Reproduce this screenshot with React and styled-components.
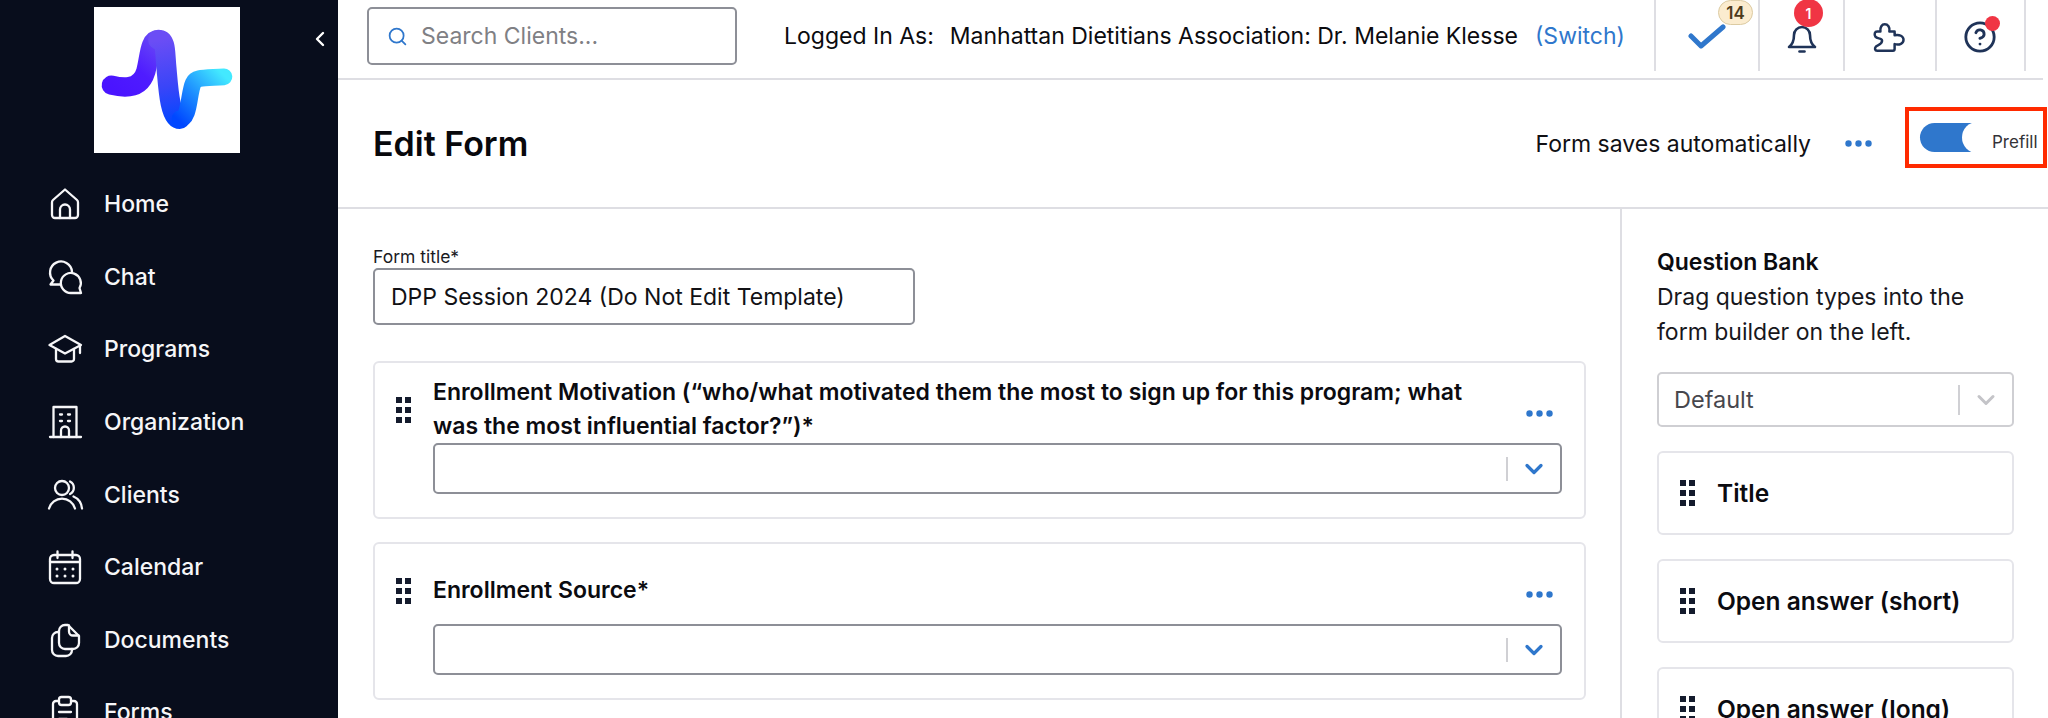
import styled, { createGlobalStyle } from 'styled-components';
import { Search, ChevronLeft, ChevronDown, CircleHelp } from 'lucide-react';

const GlobalStyle = createGlobalStyle`
  html, body {
    margin: 0;
    padding: 0;
    background: #ffffff;
    overflow: hidden;
  }
  * {
    box-sizing: border-box;
  }
  body {
    font-family: Inter, "Noto Sans", sans-serif;
    color: #0b0b0f;
  }
`;

const Page = styled.div`
  display: grid;
  grid-template-columns: 338px minmax(0, 1fr);
  width: 2048px;
  height: 718px;
  overflow: hidden;
`;

const Sidebar = styled.aside`
  background: #080d1c;
  height: 718px;
  overflow: hidden;
`;

const SidebarTop = styled.div`
  display: flex;
  justify-content: space-between;
  align-items: flex-start;
  padding: 7px 6px 0 94px;
`;

const LogoBox = styled.div`
  width: 146px;
  height: 146px;
  background: #ffffff;
  display: flex;
`;

const CollapseBtn = styled.span`
  display: flex;
  margin-top: 20px;
  color: #ffffff;
`;

const NavList = styled.nav`
  margin-top: 15px;
`;

const NavItem = styled.div`
  height: 72.6px;
  display: flex;
  align-items: center;
  padding-left: 48px;
  gap: 22px;
  color: #f6f6f8;
  font-size: 23px;
  font-weight: 500;
`;

const NavIcon = styled.svg`
  width: 34px;
  height: 34px;
  flex: none;
  fill: none;
  stroke: currentColor;
  stroke-width: 2.3;
  stroke-linecap: round;
  stroke-linejoin: round;
  overflow: visible;
`;

const Main = styled.main`
  display: flex;
  flex-direction: column;
  min-width: 0;
`;

const TopBar = styled.header`
  height: 80px;
  margin-right: 5px;
  border-bottom: 2px solid #dedee3;
  display: flex;
  align-items: flex-start;
  padding: 7px 0 0 29px;
`;

const SearchBox = styled.label`
  width: 370px;
  height: 58px;
  border: 2px solid #8d8f97;
  border-radius: 5px;
  display: flex;
  align-items: center;
  gap: 11px;
  padding-left: 18px;
  color: #2f77cc;
`;

const SearchInput = styled.input`
  border: 0;
  outline: 0;
  width: 300px;
  font: 400 23px Inter, sans-serif;
  &::placeholder {
    color: #7f8084;
    opacity: 1;
  }
`;

const UserLine = styled.div`
  margin-left: 47px;
  height: 57px;
  display: flex;
  align-items: center;
  font-size: 23px;
  white-space: nowrap;
`;

const UserName = styled.span`
  margin-left: 16px;
`;

const SwitchLink = styled.span`
  color: #2f77cc;
  margin-left: 17px;
`;

const IconCells = styled.div`
  margin-left: auto;
  margin-top: -7px;
  display: flex;
  height: 71px;
`;

const IconCell = styled.div`
  position: relative;
  width: ${(p) => p.$w}px;
  height: 71px;
  border-left: 2px solid #dedee3;
  display: flex;
  align-items: center;
  justify-content: center;
  color: #1f3358;
`;

const CountBadge = styled.span`
  position: absolute;
  top: 0;
  left: 62px;
  width: 35px;
  height: 25px;
  border-radius: 13px;
  background: #fbeccf;
  border: 1px solid #dccba2;
  color: #4d3a1c;
  font-size: 17px;
  font-weight: 600;
  display: flex;
  align-items: center;
  justify-content: center;
`;

const AlertBadge = styled.span`
  position: absolute;
  top: -1px;
  left: 34px;
  width: 29px;
  height: 28px;
  border-radius: 50%;
  background: #f03544;
  color: #ffffff;
  font-size: 14px;
  font-weight: 600;
  display: flex;
  align-items: center;
  justify-content: center;
`;

const RedDot = styled.span`
  position: absolute;
  top: 16px;
  left: 48px;
  width: 15px;
  height: 15px;
  border-radius: 50%;
  background: #f03544;
`;

const PageHead = styled.div`
  height: 129px;
  border-bottom: 2px solid #dedee3;
  display: flex;
  align-items: center;
  padding: 0 1px 0 35px;
`;

const PageTitle = styled.h1`
  margin: 0;
  font-size: 34px;
  font-weight: 600;
  color: #08080c;
`;

const SaveNote = styled.span`
  margin-left: auto;
  font-size: 23px;
  color: #101014;
`;

const HeadDots = styled.span`
  display: flex;
  margin: 0 33px 0 34px;
`;

const PrefillBox = styled.div`
  width: 142px;
  height: 61px;
  margin-bottom: 13px;
  border: 4px solid #ff2a00;
  display: flex;
  align-items: center;
  padding-left: 11px;
  gap: 2px;
`;

const Toggle = styled.span`
  position: relative;
  width: 70px;
  height: 29px;
  flex: none;
  border-radius: 15px;
  background: #2f77cc;
`;

const Knob = styled.span`
  position: absolute;
  top: -1px;
  right: -2px;
  width: 30px;
  height: 31px;
  border-radius: 50%;
  background: #ffffff;
  box-shadow: 8px 0 0 #ffffff;
`;

const PrefillText = styled.span`
  position: relative;
  font-size: 17px;
  color: #333338;
  margin-top: 10px;
`;

const Body = styled.div`
  display: flex;
  flex: 1;
  min-height: 0;
`;

const Builder = styled.section`
  width: 1284px;
  flex: none;
  border-right: 2px solid #dedee3;
  padding: 38px 34px 0 35px;
`;

const FieldLabel = styled.label`
  display: block;
  font-size: 17.5px;
  line-height: 20px;
  margin-bottom: 1px;
  color: #1a1a1f;
`;

const TitleInput = styled.input`
  display: block;
  width: 542px;
  height: 57px;
  border: 2px solid #8d8f97;
  border-radius: 5px;
  padding: 0 16px;
  font: 400 23px Inter, sans-serif;
  color: #111115;
  outline: 0;
`;

const QuestionCard = styled.div`
  display: grid;
  grid-template-columns: 37px minmax(0, 1fr);
  height: 158px;
  margin-top: ${(p) => p.$top}px;
  border: 2px solid #e5e5ea;
  border-radius: 6px;
  padding: 10px 22px 0 21px;
`;

const GripCol = styled.div`
  padding-top: 24px;
`;

const QuestionHead = styled.div`
  height: 70px;
  padding-top: 2px;
  display: flex;
  align-items: center;
  justify-content: space-between;
`;

const QuestionTitle = styled.div`
  width: 1060px;
  font-size: 23px;
  line-height: 34px;
  font-weight: 600;
  color: #0b0b10;
`;

const CardDots = styled.span`
  display: flex;
  margin-top: 8px;
  margin-right: 9px;
`;

const SelectBox = styled.div`
  height: 51px;
  border: 2px solid ${(p) => (p.$muted ? '#cfcfd3' : '#8d8f97')};
  border-radius: 5px;
  display: flex;
  align-items: center;
  justify-content: space-between;
  padding: 0 12px 0 15px;
  font-size: 23.5px;
  color: #47474d;
`;

const SelectEnd = styled.span`
  display: flex;
  align-items: center;
  gap: 12px;
  color: ${(p) => (p.$muted ? '#c4c4c8' : '#2f77cc')};
`;

const SelectBar = styled.span`
  width: 2px;
  height: ${(p) => (p.$muted ? 30 : 24)}px;
  background: #d0d0d4;
`;

const Bank = styled.aside`
  flex: 1;
  padding: 36px 34px 0 35px;
  min-width: 0;
`;

const BankHead = styled.div`
  font-size: 23px;
  line-height: 35px;
  font-weight: 600;
`;

const BankText = styled.p`
  margin: 0 0 22px;
  font-size: 23px;
  line-height: 35px;
  color: #17171c;
`;

const BankSelect = styled(SelectBox)`
  height: 55px;
`;

const BankItem = styled.div`
  height: 84px;
  margin-top: 24px;
  border: 2px solid #e5e5ea;
  border-radius: 6px;
  display: flex;
  align-items: center;
  gap: 22px;
  padding-left: 21px;
  font-size: 24.5px;
  font-weight: 600;
  color: #0b0b10;
`;

const Grip = () => (
  <svg width="15" height="26" viewBox="0 0 15 26" fill="#141b2d">
    {[0, 10, 20].map((y) => (
      <g key={y}>
        <rect x="0" y={y} width="6" height="6" />
        <rect x="9" y={y} width="6" height="6" />
      </g>
    ))}
  </svg>
);

const Dots = () => (
  <svg width="27" height="7" viewBox="0 0 27 7" fill="#2f77cc">
    <circle cx="3.5" cy="3.5" r="3.2" />
    <circle cx="13.5" cy="3.5" r="3.2" />
    <circle cx="23.5" cy="3.5" r="3.2" />
  </svg>
);

const Logo = () => (
  <svg width="146" height="146" viewBox="283 22 437 437" fill="none" strokeWidth="60" strokeLinecap="round" strokeLinejoin="round">
    <defs>
      <linearGradient id="logoA" gradientUnits="userSpaceOnUse" x1="340" y1="270" x2="480" y2="110">
        <stop offset="0" stopColor="#4a14ff" />
        <stop offset="0.45" stopColor="#4f1cff" />
        <stop offset="1" stopColor="#6b4df5" />
      </linearGradient>
      <linearGradient id="logoB" gradientUnits="userSpaceOnUse" x1="480" y1="120" x2="535" y2="370">
        <stop offset="0" stopColor="#6b4df5" />
        <stop offset="0.55" stopColor="#3a45f8" />
        <stop offset="1" stopColor="#0047ff" />
      </linearGradient>
      <linearGradient id="logoC" gradientUnits="userSpaceOnUse" x1="535" y1="360" x2="670" y2="225">
        <stop offset="0" stopColor="#0047ff" />
        <stop offset="0.45" stopColor="#1c8cff" />
        <stop offset="1" stopColor="#43e9ff" />
      </linearGradient>
    </defs>
    <path d="M335 256 C360 262 420 275 438 215 C450 170 448 120 475 120" stroke="url(#logoA)" strokeWidth="58" />
    <path d="M475 120 C500 120 495 160 500 205 C505 260 510 357 540 357" stroke="url(#logoB)" />
    <path d="M540 357 C570 357 566 280 580 250 C588 232 610 235 672 231" stroke="url(#logoC)" strokeWidth="50" />
  </svg>
);

const navItems = [
  {
    label: 'Home',
    icon: (
      <>
        <path d="M17 2.5 L29 13 a3 3 0 0 1 1 2.4 V28 a3 3 0 0 1-3 3 H7 a3 3 0 0 1-3-3 V15.4 A3 3 0 0 1 5 13 Z" />
        <path d="M12 31 V22.5 a5 5 0 0 1 10 0 V31" />
      </>
    ),
  },
  {
    label: 'Chat',
    icon: (
      <>
        <path d="M13 24.5 H2.5 L5.5 20.5 A11 11 0 1 1 24 11.5" />
        <path d="M33 33 H23 A10 10 0 1 1 31.5 28 Z" />
      </>
    ),
  },
  {
    label: 'Programs',
    icon: (
      <>
        <path d="M17 4 L33 13 L17 21.5 L1.5 13 Z" />
        <path d="M8 17 V27 a2.5 2.5 0 0 0 2.5 2.5 H23.5 a2.5 2.5 0 0 0 2.5-2.5 V17" />
        <path d="M32 14 V21" />
      </>
    ),
  },
  {
    label: 'Organization',
    icon: (
      <>
        <path d="M5.5 32 V2 H28.5 V32" />
        <path d="M2 32 H33" />
        <path d="M13 32 V25.5 a4 4 0 0 1 8 0 V32" />
        <path d="M12 9.5 H14 M20 9.5 H22 M12 16 H14 M20 16 H22" />
      </>
    ),
  },
  {
    label: 'Clients',
    icon: (
      <>
        <circle cx="14" cy="10" r="7" />
        <path d="M1 30.5 a13.5 13.5 0 0 1 26 0" />
        <path d="M22 3.5 a7 7 0 0 1 0 12.5" />
        <path d="M25.5 18.5 C30 20.5 33.5 25 34 30.5" />
      </>
    ),
  },
  {
    label: 'Calendar',
    icon: (
      <>
        <rect x="2" y="5" width="30" height="28" rx="4" />
        <path d="M2 12 H32 M9.5 1.5 V8 M24.5 1.5 V8" />
        <path d="M9 19 v0.1 M17 19 v0.1 M25 19 v0.1 M9 26 v0.1 M17 26 v0.1 M25 26 v0.1" strokeWidth="3" />
      </>
    ),
  },
  {
    label: 'Documents',
    icon: (
      <>
        <path d="M17 2 H20 L31 13 V20 a6 6 0 0 1-6 6 H17 a6 6 0 0 1-6-6 V8 a6 6 0 0 1 6-6 Z" />
        <path d="M21 2.5 V8.5 a4 4 0 0 0 4 4 H30.5" />
        <path d="M11 9 H10 a6 6 0 0 0-6 6 V27 a6 6 0 0 0 6 6 H18 a6 6 0 0 0 6-6 V26" />
      </>
    ),
  },
  {
    label: 'Forms',
    icon: (
      <>
        <path d="M11 6 H8 a3 3 0 0 0-3 3 V33 a3 3 0 0 0 3 3 H26 a3 3 0 0 0 3-3 V9 a3 3 0 0 0-3-3 H23" />
        <rect x="11" y="2" width="12" height="8" rx="2.5" />
        <path d="M11 17 H23 M11 24 H19" />
      </>
    ),
  },
];

const questions = [
  {
    title: 'Enrollment Motivation (“who/what motivated them the most to sign up for this program; what was the most influential factor?”)*',
    top: 36,
  },
  { title: 'Enrollment Source*', top: 23 },
];

const bankItems = ['Title', 'Open answer (short)', 'Open answer (long)'];

export default function App() {
  return (
    <>
      <GlobalStyle />
      <Page>
        <Sidebar>
          <SidebarTop>
            <LogoBox>
              <Logo />
            </LogoBox>
            <CollapseBtn>
              <ChevronLeft size={24} strokeWidth={2.4} />
            </CollapseBtn>
          </SidebarTop>
          <NavList>
            {navItems.map((item) => (
              <NavItem key={item.label}>
                <NavIcon viewBox="0 0 34 34">{item.icon}</NavIcon>
                {item.label}
              </NavItem>
            ))}
          </NavList>
        </Sidebar>

        <Main>
          <TopBar>
            <SearchBox>
              <Search size={21} strokeWidth={2} />
              <SearchInput placeholder="Search Clients..." />
            </SearchBox>
            <UserLine>
              Logged In As:
              <UserName>Manhattan Dietitians Association: Dr. Melanie Klesse</UserName>
              <SwitchLink>(Switch)</SwitchLink>
            </UserLine>
            <IconCells>
              <IconCell $w={104}>
                <svg width="38" height="26" viewBox="0 0 38 26" fill="none" stroke="#2f77cc" strokeWidth="5" strokeLinecap="round" strokeLinejoin="round" style={{ marginTop: 2 }}>
                  <path d="M3 12 L13 22 L35 3" />
                </svg>
                <CountBadge>14</CountBadge>
              </IconCell>
              <IconCell $w={85}>
                <svg width="30" height="32" viewBox="0 0 30 32" fill="none" stroke="#1f3358" strokeWidth="2.6" strokeLinecap="round" strokeLinejoin="round" style={{ marginTop: 4 }}>
                  <path d="M7 13 a8 8 0 0 1 16 0 c0 6 1 9 5 12 H2 c4-3 5-6 5-12 Z" />
                  <path d="M12.5 29.5 H17.5" />
                </svg>
                <AlertBadge>1</AlertBadge>
              </IconCell>
              <IconCell $w={92}>
                <svg width="35" height="33" viewBox="95 60 105 100" fill="none" stroke="#1f3358" strokeWidth="7.5" strokeLinejoin="round" style={{ marginTop: 3, marginRight: 1 }}>
                  <path d="M110 92 H120 C118 78 125 70 133 70 C142 70 150 78 147 92 H163 V103 C178 100 190 106 190 117 C190 128 178 134 163 130 V145 a5 5 0 0 1-5 5 H110 C103 150 102 143 106 138 C112 132 125 132 125 120 C125 110 110 115 105 108 C100 100 103 92 110 92 Z" />
                </svg>
              </IconCell>
              <IconCell $w={89}>
                <CircleHelp size={34} strokeWidth={2} style={{ marginTop: 2, marginRight: 2 }} />
                <RedDot />
              </IconCell>
              <IconCell $w={19} />
            </IconCells>
          </TopBar>

          <PageHead>
            <PageTitle>Edit Form</PageTitle>
            <SaveNote>Form saves automatically</SaveNote>
            <HeadDots>
              <Dots />
            </HeadDots>
            <PrefillBox>
              <Toggle>
                <Knob />
              </Toggle>
              <PrefillText>Prefill</PrefillText>
            </PrefillBox>
          </PageHead>

          <Body>
            <Builder>
              <FieldLabel>Form title*</FieldLabel>
              <TitleInput defaultValue="DPP Session 2024 (Do Not Edit Template)" />
              {questions.map((q) => (
                <QuestionCard key={q.title} $top={q.top}>
                  <GripCol>
                    <Grip />
                  </GripCol>
                  <div>
                    <QuestionHead>
                      <QuestionTitle>{q.title}</QuestionTitle>
                      <CardDots>
                        <Dots />
                      </CardDots>
                    </QuestionHead>
                    <SelectBox>
                      <span />
                      <SelectEnd>
                        <SelectBar />
                        <ChevronDown size={28} strokeWidth={2.8} />
                      </SelectEnd>
                    </SelectBox>
                  </div>
                </QuestionCard>
              ))}
            </Builder>

            <Bank>
              <BankHead>Question Bank</BankHead>
              <BankText>
                Drag question types into the
                <br />
                form builder on the left.
              </BankText>
              <BankSelect $muted>
                Default
                <SelectEnd $muted>
                  <SelectBar $muted />
                  <ChevronDown size={28} strokeWidth={2.6} />
                </SelectEnd>
              </BankSelect>
              {bankItems.map((name) => (
                <BankItem key={name}>
                  <Grip />
                  {name}
                </BankItem>
              ))}
            </Bank>
          </Body>
        </Main>
      </Page>
    </>
  );
}
